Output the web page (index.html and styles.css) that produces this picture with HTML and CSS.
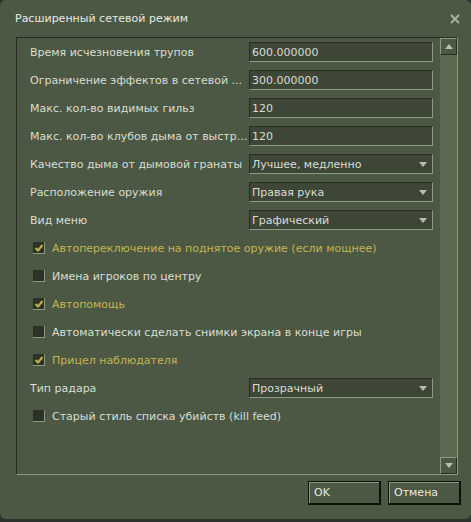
FILE: index.html
```html
<!DOCTYPE html>
<html lang="ru">
<head>
<meta charset="utf-8">
<title>Расширенный сетевой режим</title>
<link rel="stylesheet" href="styles.css">
</head>
<body>
<div class="window">
  <div class="titlebar">
    <span class="title">Расширенный сетевой режим</span>
    <svg class="close" width="10" height="10" viewBox="0 0 10 10"><path d="M1 1 L9 9 M9 1 L1 9" stroke="#a9b0a2" stroke-width="2" fill="none"/></svg>
  </div>
  <div class="panel">
    <div class="content">
      <div class="row"><span class="label">Время исчезновения трупов</span><div class="field">600.000000</div></div>
      <div class="row"><span class="label">Ограничение эффектов в сетевой ...</span><div class="field">300.000000</div></div>
      <div class="row"><span class="label">Макс. кол-во видимых гильз</span><div class="field">120</div></div>
      <div class="row"><span class="label">Макс. кол-во клубов дыма от выстр...</span><div class="field">120</div></div>
      <div class="row"><span class="label">Качество дыма от дымовой гранаты</span><div class="field combo"><span>Лучшее, медленно</span><i class="arrow"></i></div></div>
      <div class="row"><span class="label">Расположение оружия</span><div class="field combo"><span>Правая рука</span><i class="arrow"></i></div></div>
      <div class="row"><span class="label">Вид меню</span><div class="field combo"><span>Графический</span><i class="arrow"></i></div></div>
      <div class="row check on"><span class="box"><svg width="10" height="10" viewBox="0 0 10 10"><path d="M1.5 5 L4 7.5 L8.5 2" stroke="#c4b550" stroke-width="2" fill="none"/></svg></span><span class="ctext">Автопереключение на поднятое оружие (если мощнее)</span></div>
      <div class="row check"><span class="box"></span><span class="ctext">Имена игроков по центру</span></div>
      <div class="row check on"><span class="box"><svg width="10" height="10" viewBox="0 0 10 10"><path d="M1.5 5 L4 7.5 L8.5 2" stroke="#c4b550" stroke-width="2" fill="none"/></svg></span><span class="ctext">Автопомощь</span></div>
      <div class="row check"><span class="box"></span><span class="ctext">Автоматически сделать снимки экрана в конце игры</span></div>
      <div class="row check on"><span class="box"><svg width="10" height="10" viewBox="0 0 10 10"><path d="M1.5 5 L4 7.5 L8.5 2" stroke="#c4b550" stroke-width="2" fill="none"/></svg></span><span class="ctext">Прицел наблюдателя</span></div>
      <div class="row"><span class="label">Тип радара</span><div class="field combo"><span>Прозрачный</span><i class="arrow"></i></div></div>
      <div class="row check"><span class="box"></span><span class="ctext">Старый стиль списка убийств (kill feed)</span></div>
    </div>
    <div class="scrollbar">
      <div class="sbtn"><i class="up"></i></div>
      <div class="track"></div>
      <div class="sbtn"><i class="down"></i></div>
    </div>
  </div>
  <div class="footer">
    <div class="btn">OK</div>
    <div class="btn">Отмена</div>
  </div>
</div>
</body>
</html>
```

FILE: styles.css
```css
html, body {
  margin: 0;
  padding: 0;
  background: #2d322d;
}
body {
  width: 471px;
  height: 522px;
  overflow: hidden;
  font-family: "DejaVu Sans", Tahoma, sans-serif;
  font-size: 11px;
  color: #d8ded3;
}
.window {
  width: 471px;
  height: 519px;
  background: #4c5844;
  border-radius: 6px;
  box-sizing: border-box;
  padding-top: 1px;
}
.titlebar {
  height: 36px;
  display: flex;
  align-items: center;
  justify-content: space-between;
  padding: 0 11px 0 15px;
  box-sizing: border-box;
}
.title {
  font-size: 11px;
  color: #e6eae0;
  margin-top: -2px;
}
.close {
  display: block;
  margin-top: -1px;
}
.panel {
  margin-left: 16px;
  width: 442px;
  height: 438px;
  box-sizing: border-box;
  border-top: 1px solid #272d22;
  border-left: 1px solid #272d22;
  border-right: 1px solid #8c9a80;
  border-bottom: 1px solid #8c9a80;
  display: flex;
}
.content {
  flex: 1;
  padding-left: 13px;
}
.row {
  height: 28px;
  display: flex;
  align-items: center;
}
.label {
  width: 219px;
  white-space: nowrap;
  overflow: hidden;
}
.field {
  width: 184px;
  height: 20px;
  box-sizing: border-box;
  background: #3e4637;
  border-top: 1px solid #272d22;
  border-left: 1px solid #272d22;
  border-right: 1px solid #8c9a80;
  border-bottom: 1px solid #8c9a80;
  padding-left: 2px;
  display: flex;
  align-items: center;
}
.combo {
  justify-content: space-between;
  padding-right: 5px;
}
.arrow {
  display: block;
  width: 0;
  height: 0;
  border-left: 4px solid transparent;
  border-right: 4px solid transparent;
  border-top: 5px solid #b9beb2;
}
.check .box {
  width: 12px;
  height: 12px;
  box-sizing: border-box;
  margin-left: 3px;
  margin-right: 7px;
  background: #2c3227;
  border-right: 1px solid #8c9a80;
  border-bottom: 1px solid #8c9a80;
  display: flex;
  align-items: center;
  justify-content: center;
}
.check .box svg {
  display: block;
}
.check.on .ctext {
  color: #c4b550;
}
.scrollbar {
  width: 17px;
  display: flex;
  flex-direction: column;
  background: #5a6a50;
}
.track {
  flex: 1;
}
.sbtn {
  height: 17px;
  box-sizing: border-box;
  background: #4c5844;
  border-top: 1px solid #8c9a80;
  border-left: 1px solid #8c9a80;
  border-right: 1px solid #272d22;
  border-bottom: 1px solid #272d22;
  display: flex;
  align-items: center;
  justify-content: center;
}
.up {
  display: block;
  width: 0;
  height: 0;
  border-left: 4px solid transparent;
  border-right: 4px solid transparent;
  border-bottom: 5px solid #b9beb2;
}
.down {
  display: block;
  width: 0;
  height: 0;
  border-left: 4px solid transparent;
  border-right: 4px solid transparent;
  border-top: 5px solid #b9beb2;
}
.footer {
  display: flex;
  justify-content: flex-end;
  gap: 7px;
  padding: 6px 10px 0 0;
}
.btn {
  width: 73px;
  height: 24px;
  box-sizing: border-box;
  border: 1px solid #0e100c;
  border-right-width: 2px;
  border-bottom-width: 2px;
  box-shadow: inset 1px 1px 0 #8c9a80;
  padding-left: 5px;
  display: flex;
  align-items: center;
  font-size: 11px;
  color: #e6eae0;
}
```
